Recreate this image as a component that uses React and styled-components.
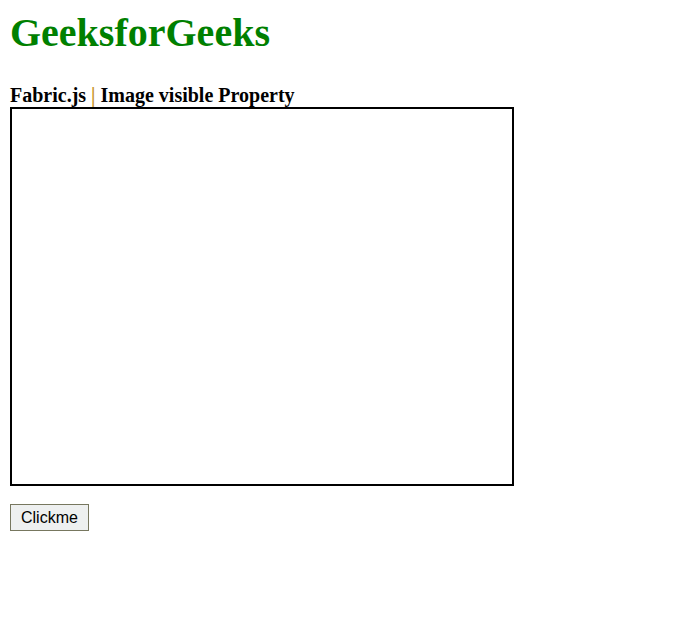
import React from 'react';
import styled, { createGlobalStyle } from 'styled-components';

const GlobalStyle = createGlobalStyle`
  body {
    margin: 0;
    background: #fff;
    font-family: "Liberation Serif", "Times New Roman", serif;
  }
`;

const Page = styled.div`
  padding: 8px 10px;
  display: flex;
  flex-direction: column;
  align-items: flex-start;
`;

const Title = styled.h1`
  margin: 0 0 25px 0;
  font-size: 40px;
  line-height: 50px;
  font-weight: bold;
  color: #008000;
`;

const Subtitle = styled.b`
  display: block;
  font-size: 20px;
  line-height: 24px;
  color: #000;
`;

const Pipe = styled.span`
  color: #c8921e;
`;

const Canvas = styled.div`
  width: 500px;
  height: 375px;
  border: 2px solid #000;
  background: #fff;
`;

const Button = styled.button`
  margin-top: 18px;
  font-family: "Liberation Sans", Arial, sans-serif;
  font-size: 16px;
  line-height: 19px;
  padding: 3px 10px;
  color: #000;
  background: #eef0f0;
  border: 1px solid #77775f;
  border-radius: 0;
`;

export default function App() {
  return (
    <>
      <GlobalStyle />
      <Page>
        <Title>GeeksforGeeks</Title>
        <Subtitle>
          Fabric.js <Pipe>|</Pipe> Image visible Property
        </Subtitle>
        <Canvas />
        <Button>Clickme</Button>
      </Page>
    </>
  );
}
